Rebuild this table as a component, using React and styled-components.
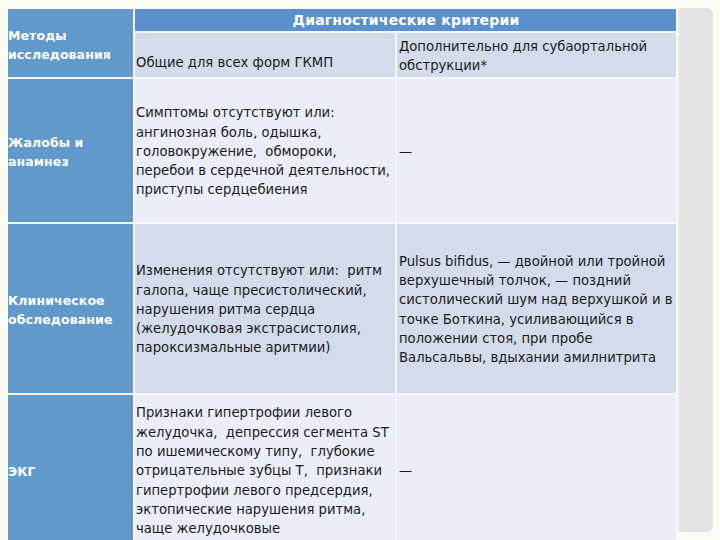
import React from 'react';
import styled, { createGlobalStyle } from 'styled-components';

const GlobalStyle = createGlobalStyle`
  html, body {
    margin: 0;
    padding: 0;
    background: #fbfaf3;
    overflow: hidden;
  }
  body {
    font-family: "DejaVu Sans", "Liberation Sans", sans-serif;
  }
`;

const Page = styled.div`
  display: flex;
  align-items: flex-start;
  gap: 2px;
  width: 720px;
  height: 540px;
  padding: 8px 0 0 8px;
  box-sizing: border-box;
  overflow: hidden;
`;

const Table = styled.div`
  display: grid;
  grid-template-columns: 125px 260px 279px;
  grid-template-rows: 22px 44px 143px 169px 150px;
  gap: 2px;
  margin-top: 1px;
  background: #f3f6fc;
  flex-shrink: 0;
`;

const SidePanel = styled.div`
  width: 35px;
  height: 524px;
  border-radius: 0 6px 6px 0;
  background: linear-gradient(to right, #eae9ec 0, #e4e4e4 4px, #e3e3e3 100%);
  flex-shrink: 0;
`;

const tones = {
  blue: '#6199cd',
  head: '#5a90cc',
  dark: '#d3dcea',
  light: '#e9eef9',
};

const Cell = styled.div`
  display: flex;
  align-items: ${p => p.$valign || 'center'};
  justify-content: ${p => (p.$center ? 'center' : 'flex-start')};
  background: ${p => tones[p.$tone]};
  padding: ${p => p.$pad || '0 0 0 1px'};
  box-sizing: border-box;
  overflow: hidden;
  grid-column: ${p => p.$col || 'auto'};
  grid-row: ${p => p.$row || 'auto'};
`;

const RowLabel = styled.div`
  color: #ffffff;
  font-weight: bold;
  font-size: 12.5px;
  line-height: 19px;
  white-space: pre;
  margin-left: -1px;
  letter-spacing: 0.1px;
`;

const Title = styled.div`
  color: #ffffff;
  font-weight: bold;
  font-size: 14px;
  line-height: 22px;
  letter-spacing: 0.2px;
`;

const Text = styled.div`
  color: #1a1a1a;
  font-size: 13.2px;
  line-height: 19.3px;
  white-space: pre;
`;

const rows = [
  {
    label: 'Жалобы и\nанамнез',
    tone: 'light',
    common:
      'Симптомы отсутствуют или:\nангинозная боль, одышка,\nголовокружение,  обмороки,\nперебои в сердечной деятельности,\nприступы сердцебиения',
    extra: '—',
  },
  {
    label: 'Клиническое\nобследование',
    tone: 'dark',
    common:
      'Изменения отсутствуют или:  ритм\nгалопа, чаще пресистолический,\nнарушения ритма сердца\n(желудочковая экстрасистолия,\nпароксизмальные аритмии)',
    extra:
      'Pulsus bifidus, — двойной или тройной\nверхушечный толчок, — поздний\nсистолический шум над верхушкой и в\nточке Боткина, усиливающийся в\nположении стоя, при пробе\nВальсальвы, вдыхании амилнитрита',
  },
  {
    label: 'ЭКГ',
    tone: 'light',
    common:
      'Признаки гипертрофии левого\nжелудочка,  депрессия сегмента ST\nпо ишемическому типу,  глубокие\nотрицательные зубцы Т,  признаки\nгипертрофии левого предсердия,\nэктопические нарушения ритма,\nчаще желудочковые',
    extra: '—',
  },
];

const App = () => {
  return (
    <>
      <GlobalStyle />
      <Page>
        <Table>
          <Cell $tone="blue" $row="1 / 3" $pad="4px 0 0 1px">
            <RowLabel>{'Методы\nисследования'}</RowLabel>
          </Cell>
          <Cell $tone="head" $col="2 / 4" $center>
            <Title>Диагностические критерии</Title>
          </Cell>
          <Cell $tone="dark" $valign="flex-end" $pad="0 0 5px 1px">
            <Text>Общие для всех форм ГКМП</Text>
          </Cell>
          <Cell $tone="dark" $pad="2px 0 0 2px">
            <Text>{'Дополнительно для субаортальной\nобструкции*'}</Text>
          </Cell>

          {rows.map((row, i) => (
            <React.Fragment key={i}>
              <Cell $tone="blue" $pad="2px 0 0 1px">
                <RowLabel>{row.label}</RowLabel>
              </Cell>
              <Cell $tone={row.tone} $pad="2px 0 0 1px">
                <Text>{row.common}</Text>
              </Cell>
              <Cell $tone={row.tone} $pad="2px 0 0 2px">
                <Text>{row.extra}</Text>
              </Cell>
            </React.Fragment>
          ))}
        </Table>
        <SidePanel />
      </Page>
    </>
  );
};

export default App;
